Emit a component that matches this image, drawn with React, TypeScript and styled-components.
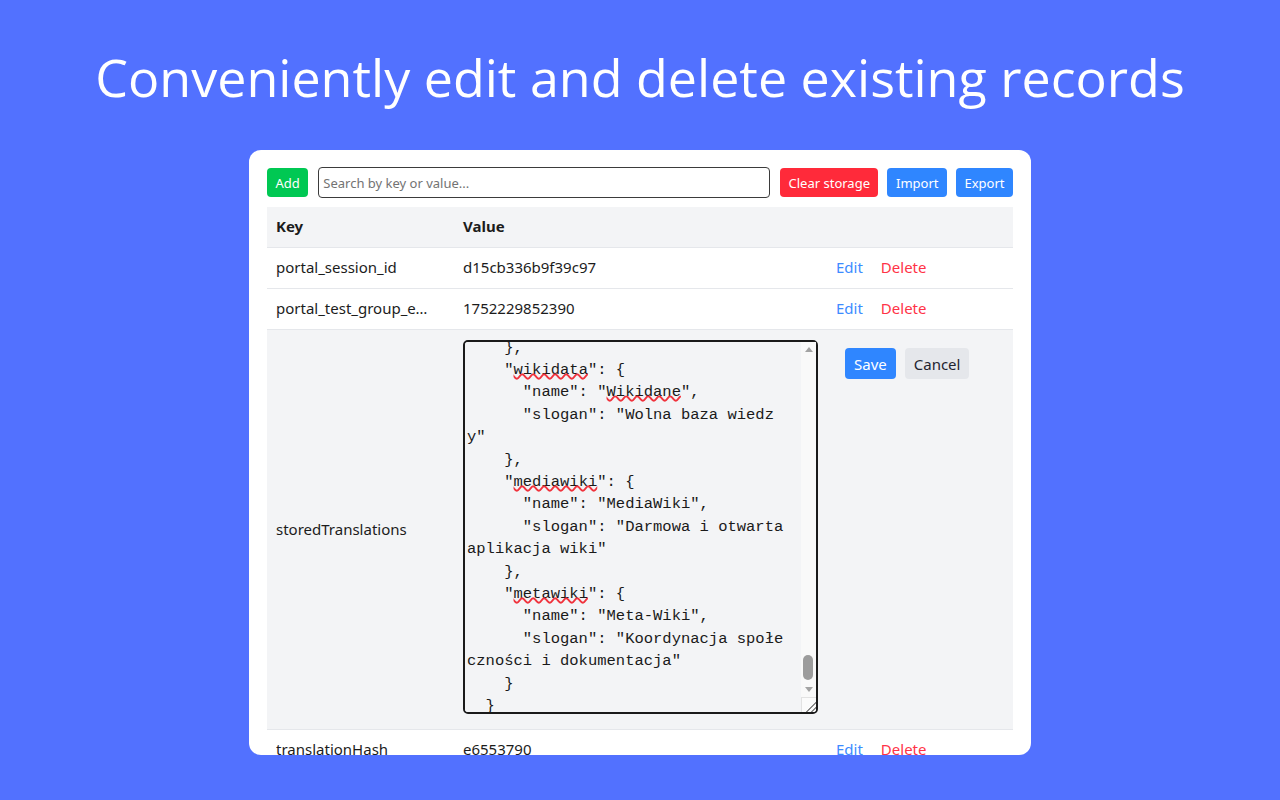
import React, { useLayoutEffect, useMemo, useRef, useState } from 'react';
import styled, { createGlobalStyle, css } from 'styled-components';

const GlobalStyle = createGlobalStyle`
  html, body { margin: 0; padding: 0; }
  body {
    background: #5271ff;
    font-family: "Noto Sans", "Open Sans", sans-serif;
    width: 1280px;
    height: 800px;
    overflow: hidden;
  }
`;

const Page = styled.div`
  width: 1280px;
  height: 800px;
  display: flex;
  flex-direction: column;
  align-items: center;
`;

const Title = styled.h1`
  margin: 0;
  padding-top: 43px;
  font-family: "Open Sans", "Noto Sans", sans-serif;
  font-weight: 400;
  font-size: 52px;
  line-height: 68px;
  color: #ffffff;
  white-space: nowrap;
`;

const Card = styled.div`
  margin-top: 39px;
  width: 782px;
  height: 605px;
  box-sizing: border-box;
  background: #ffffff;
  border-radius: 12px;
  overflow: hidden;
  padding: 17px 18px 0;
`;

const Toolbar = styled.div`
  display: flex;
  align-items: center;
  gap: 9px;
  height: 31px;
`;

type Variant = 'green' | 'red' | 'blue' | 'gray';

const variantColors: Record<Variant, { bg: string; fg: string }> = {
  green: { bg: '#00c853', fg: '#ffffff' },
  red: { bg: '#ff2a3a', fg: '#ffffff' },
  blue: { bg: '#2f86ff', fg: '#ffffff' },
  gray: { bg: '#e5e7eb', fg: '#1f2430' },
};

const Button = styled.button<{ $variant: Variant; $size?: 'sm' | 'md' }>`
  flex: none;
  border: none;
  border-radius: 4px;
  padding: 0 9px;
  font-family: "Noto Sans", sans-serif;
  cursor: pointer;
  background: ${(p) => variantColors[p.$variant].bg};
  color: ${(p) => variantColors[p.$variant].fg};
  ${(p) =>
    p.$size === 'md'
      ? css`
          height: 31px;
          font-size: 15px;
        `
      : css`
          height: 29px;
          font-size: 13px;
          padding: 0 8.5px;
        `}
`;

const Search = styled.input`
  flex: 1;
  min-width: 0;
  height: 31px;
  box-sizing: border-box;
  margin: 0 1px 0 1px;
  border: 1.5px solid #3b3b3b;
  border-radius: 4px;
  padding: 0 4px;
  font-family: "Noto Sans", sans-serif;
  font-size: 13px;
  color: #222;
  background: #fff;
  outline: none;
  &::placeholder {
    color: #737373;
  }
`;

const Table = styled.div`
  margin-top: 9px;
  display: flex;
  flex-direction: column;
`;

const Row = styled.div<{ $shaded?: boolean }>`
  display: grid;
  grid-template-columns: 187px 373px 1fr;
  min-height: 40px;
  border-bottom: 1px solid #e5e7eb;
  background: ${(p) => (p.$shaded ? '#f3f4f6' : '#ffffff')};
`;

const Cell = styled.div<{ $bold?: boolean }>`
  display: flex;
  align-items: center;
  padding: 0 9px 2px;
  min-width: 0;
  font-size: 15px;
  color: #1c1c1c;
  font-weight: ${(p) => (p.$bold ? 700 : 400)};
`;

const KeyText = styled.span`
  display: block;
  max-width: 158px;
  overflow: hidden;
  white-space: nowrap;
  text-overflow: ellipsis;
`;

const Actions = styled.div`
  display: flex;
  align-items: center;
  gap: 18px;
  padding: 0 9px 2px;
`;

const LinkButton = styled.button<{ $danger?: boolean }>`
  border: none;
  background: none;
  padding: 0;
  font-family: "Noto Sans", sans-serif;
  font-size: 15px;
  cursor: pointer;
  color: ${(p) => (p.$danger ? '#ff3347' : '#3d8bff')};
`;

const EditorCell = styled.div`
  padding: 10px 9px 15px;
`;

const EditorWrap = styled.div`
  position: relative;
  width: 355px;
  height: 374px;
`;

const monoText = css`
  font-family: "Liberation Mono", "DejaVu Sans Mono", monospace;
  font-size: 15.5px;
  line-height: 22.4px;
  white-space: pre-wrap;
  word-break: break-all;
`;

const Editor = styled.textarea`
  display: block;
  width: 355px;
  height: 374px;
  box-sizing: border-box;
  margin: 0;
  border: 2px solid #1a1a1a;
  border-radius: 5px;
  padding: 2px 17px 2px 2px;
  background: #f3f4f6;
  color: #1a1a1a;
  outline: none;
  resize: none;
  ${monoText}
`;

const SpellLayer = styled.div`
  position: absolute;
  left: 0;
  top: 0;
  width: 340px;
  height: 374px;
  box-sizing: border-box;
  border: 2px solid transparent;
  padding: 2px;
  overflow: hidden;
  pointer-events: none;
  color: transparent;
  ${monoText}
`;

const SpellLine = styled.div`
  height: 22.4px;
`;

const Misspelled = styled.span`
  text-decoration-line: underline;
  text-decoration-style: wavy;
  text-decoration-color: #f0323c;
  text-decoration-thickness: 1.5px;
  text-underline-offset: 3px;
`;

/* scrollbar drawn over the textarea (the page is photographed with hidden native scrollbars) */
const Rail = styled.div`
  position: absolute;
  top: 2px;
  right: 2px;
  bottom: 17px;
  width: 15px;
  display: flex;
  flex-direction: column;
  background: #f9f9f9;
  pointer-events: none;
`;

const Corner = styled.div`
  position: absolute;
  right: 2px;
  bottom: 2px;
  width: 14px;
  height: 14px;
  border-top: 1px solid #e2e2e2;
  border-left: 1px solid #e2e2e2;
  border-bottom-right-radius: 3px;
  background-color: #fbfbfb;
  background-image: linear-gradient(
    135deg,
    transparent 0 62%,
    #8a8a8a 62% 68%,
    transparent 68% 80%,
    #8a8a8a 80% 86%,
    transparent 86%
  );
  pointer-events: none;
`;

const ArrowBtn = styled.div<{ $dir: 'up' | 'down' }>`
  flex: none;
  height: 15px;
  display: flex;
  align-items: center;
  justify-content: center;
  &::before {
    content: '';
    width: 0;
    height: 0;
    border-left: 4.5px solid transparent;
    border-right: 4.5px solid transparent;
    ${(p) =>
      p.$dir === 'up'
        ? css`
            border-bottom: 5px solid #a3a3a3;
          `
        : css`
            border-top: 5px solid #a3a3a3;
          `}
  }
`;

const Track = styled.div`
  position: relative;
  flex: 1;
`;

const Thumb = styled.div`
  position: absolute;
  left: 2px;
  right: 3px;
  border-radius: 6px;
  background: #9c9c9c;
`;

const EditActions = styled.div`
  align-self: start;
  display: flex;
  gap: 9px;
  padding: 18px 0 0 18px;
`;

const projectKeys = [
  'wikipedia',
  'wiktionary',
  'wikiquote',
  'wikibooks',
  'wikisource',
  'wikinews',
  'wikiversity',
  'wikivoyage',
  'commons',
  'wikispecies',
  'wikidata',
  'mediawiki',
  'metawiki',
];

const langData: Record<string, [string, string][]> = {
  de: [
    ['Wikipedia', 'Die freie Enzyklopädie'],
    ['Wiktionary', 'Das freie Wörterbuch'],
    ['Wikiquote', 'Die freie Zitatsammlung'],
    ['Wikibooks', 'Freie Lehrbücher'],
    ['Wikisource', 'Die freie Quellensammlung'],
    ['Wikinews', 'Die freie Nachrichtenquelle'],
    ['Wikiversity', 'Freie Lernmaterialien'],
    ['Wikivoyage', 'Der freie Reiseführer'],
    ['Commons', 'Freie Mediensammlung'],
    ['Wikispecies', 'Das freie Artenverzeichnis'],
    ['Wikidata', 'Die freie Wissensdatenbank'],
    ['MediaWiki', 'Freie und offene Wiki-Software'],
    ['Meta-Wiki', 'Koordination der Gemeinschaft'],
  ],
  en: [
    ['Wikipedia', 'The Free Encyclopedia'],
    ['Wiktionary', 'The free dictionary'],
    ['Wikiquote', 'Free quote compendium'],
    ['Wikibooks', 'Free textbooks'],
    ['Wikisource', 'The free library'],
    ['Wikinews', 'Free news source'],
    ['Wikiversity', 'Free learning resources'],
    ['Wikivoyage', 'Free travel guide'],
    ['Commons', 'Free media collection'],
    ['Wikispecies', 'Free species directory'],
    ['Wikidata', 'Free knowledge base'],
    ['MediaWiki', 'Free & open wiki software'],
    ['Meta-Wiki', 'Community & documentation coordination'],
  ],
  es: [
    ['Wikipedia', 'La enciclopedia libre'],
    ['Wikcionario', 'El diccionario libre'],
    ['Wikiquote', 'La colección de citas libre'],
    ['Wikilibros', 'Libros de texto libres'],
    ['Wikisource', 'La biblioteca libre'],
    ['Wikinoticias', 'La fuente de noticias libre'],
    ['Wikiversidad', 'Recursos de aprendizaje libres'],
    ['Wikiviajes', 'La guía de viajes libre'],
    ['Commons', 'Colección multimedia libre'],
    ['Wikispecies', 'El directorio de especies libre'],
    ['Wikidata', 'La base de conocimiento libre'],
    ['MediaWiki', 'Software wiki libre y abierto'],
    ['Meta-Wiki', 'Coordinación de la comunidad'],
  ],
  pl: [
    ['Wikipedia', 'Wolna encyklopedia'],
    ['Wikisłownik', 'Wolny słownik'],
    ['Wikicytaty', 'Wolny zbiór cytatów'],
    ['Wikibooks', 'Wolne podręczniki'],
    ['Wikiźródła', 'Wolna biblioteka'],
    ['Wikinews', 'Wolne wiadomości'],
    ['Wikiwersytet', 'Wolne materiały edukacyjne'],
    ['Wikipodróże', 'Wolny przewodnik turystyczny'],
    ['Commons', 'Wolne repozytorium multimediów'],
    ['Wikispecies', 'Wolny katalog gatunków'],
    ['Wikidane', 'Wolna baza wiedzy'],
    ['MediaWiki', 'Darmowa i otwarta aplikacja wiki'],
    ['Meta-Wiki', 'Koordynacja społeczności i dokumentacja'],
  ],
};

function buildTranslations() {
  const root: Record<string, Record<string, { name: string; slogan: string }>> = {};
  Object.entries(langData).forEach(([lang, list]) => {
    const obj: Record<string, { name: string; slogan: string }> = {};
    list.forEach(([name, slogan], i) => {
      obj[projectKeys[i]] = { name, slogan };
    });
    root[lang] = obj;
  });
  return JSON.stringify(root, null, 2);
}

function wrapLine(line: string): string[] {
  const width = line.includes('Wolna baza wiedzy') ? 33 : 34;
  const out: string[] = [];
  let rest = line;
  while (rest.length > width) {
    let chunk = rest.slice(0, width);
    rest = rest.slice(width);
    if (rest.startsWith(' ')) {
      chunk += ' ';
      rest = rest.slice(1);
    }
    out.push(chunk);
  }
  out.push(rest);
  return out;
}

const LINE_H = 22.4;
const TRACK_LEN = 374 - 2 - 17 - 30;
const flagged = ['wikidata', 'Wikidane', 'mediawiki', 'metawiki'];

function renderSpell(line: string) {
  const re = new RegExp(`(${flagged.join('|')})`, 'g');
  const parts = line.split(re);
  return parts.map((part, i) =>
    flagged.includes(part) ? (
      <Misspelled key={i}>{part}</Misspelled>
    ) : (
      <React.Fragment key={i}>{part}</React.Fragment>
    )
  );
}

function JsonEditor() {
  const lines = useMemo(() => buildTranslations().split('\n').flatMap(wrapLine), []);
  const text = useMemo(() => lines.join('\n'), [lines]);
  const areaRef = useRef<HTMLTextAreaElement>(null);
  const layerRef = useRef<HTMLDivElement>(null);
  const [thumb, setThumb] = useState({ top: 286, height: 25 });

  const sync = () => {
    const el = areaRef.current;
    if (!el) return;
    if (layerRef.current) layerRef.current.scrollTop = el.scrollTop;
    const height = Math.max(25, (TRACK_LEN * el.clientHeight) / el.scrollHeight);
    const range = el.scrollHeight - el.clientHeight;
    const top = range > 0 ? ((TRACK_LEN - height) * el.scrollTop) / range : 0;
    setThumb({ top, height });
  };

  useLayoutEffect(() => {
    const plIdx = lines.indexOf('  "pl": {');
    let k = plIdx;
    while (k < lines.length && lines[k] !== '    "wikidata": {') k++;
    const top = (k - 1) * LINE_H + 9.2;
    if (areaRef.current) areaRef.current.scrollTop = top;
    sync();
  }, [lines]);

  return (
    <EditorWrap>
      <Editor ref={areaRef} defaultValue={text} spellCheck={false} onScroll={sync} />
      <SpellLayer ref={layerRef} aria-hidden>
        {lines.map((l, i) => (
          <SpellLine key={i}>{renderSpell(l)}</SpellLine>
        ))}
      </SpellLayer>
      <Rail aria-hidden>
        <ArrowBtn $dir="up" />
        <Track>
          <Thumb style={{ top: thumb.top, height: thumb.height }} />
        </Track>
        <ArrowBtn $dir="down" />
      </Rail>
      <Corner aria-hidden />
    </EditorWrap>
  );
}

const rows = [
  { key: 'portal_session_id', value: 'd15cb336b9f39c97' },
  { key: 'portal_test_group_expiry', value: '1752229852390' },
];

export default function App() {
  return (
    <>
      <GlobalStyle />
      <Page>
        <Title>Conveniently edit and delete existing records</Title>
        <Card>
          <Toolbar>
            <Button $variant="green">Add</Button>
            <Search placeholder="Search by key or value..." />
            <Button $variant="red">Clear storage</Button>
            <Button $variant="blue">Import</Button>
            <Button $variant="blue">Export</Button>
          </Toolbar>
          <Table>
            <Row $shaded>
              <Cell $bold>Key</Cell>
              <Cell $bold>Value</Cell>
              <Cell />
            </Row>
            {rows.map((r) => (
              <Row key={r.key}>
                <Cell>
                  <KeyText>{r.key}</KeyText>
                </Cell>
                <Cell>{r.value}</Cell>
                <Actions>
                  <LinkButton>Edit</LinkButton>
                  <LinkButton $danger>Delete</LinkButton>
                </Actions>
              </Row>
            ))}
            <Row $shaded>
              <Cell>
                <KeyText>storedTranslations</KeyText>
              </Cell>
              <EditorCell>
                <JsonEditor />
              </EditorCell>
              <EditActions>
                <Button $variant="blue" $size="md">
                  Save
                </Button>
                <Button $variant="gray" $size="md">
                  Cancel
                </Button>
              </EditActions>
            </Row>
            <Row>
              <Cell>
                <KeyText>translationHash</KeyText>
              </Cell>
              <Cell>e6553790</Cell>
              <Actions>
                <LinkButton>Edit</LinkButton>
                <LinkButton $danger>Delete</LinkButton>
              </Actions>
            </Row>
          </Table>
        </Card>
      </Page>
    </>
  );
}
